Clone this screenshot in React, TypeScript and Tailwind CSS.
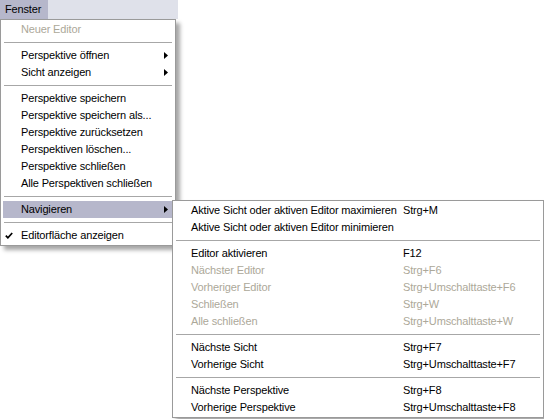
import React from "react";

type Item =
  | { sep: true }
  | { label: string; disabled?: boolean; arrow?: boolean; checked?: boolean; active?: boolean; shortcut?: string };

const mainItems: Item[] = [
  { label: "Neuer Editor", disabled: true },
  { sep: true },
  { label: "Perspektive öffnen", arrow: true },
  { label: "Sicht anzeigen", arrow: true },
  { sep: true },
  { label: "Perspektive speichern" },
  { label: "Perspektive speichern als..." },
  { label: "Perspektive zurücksetzen" },
  { label: "Perspektiven löschen..." },
  { label: "Perspektive schließen" },
  { label: "Alle Perspektiven schließen" },
  { sep: true },
  { label: "Navigieren", arrow: true, active: true },
  { sep: true },
  { label: "Editorfläche anzeigen", checked: true },
];

const subItems: Item[] = [
  { label: "Aktive Sicht oder aktiven Editor maximieren", shortcut: "Strg+M" },
  { label: "Aktive Sicht oder aktiven Editor minimieren" },
  { sep: true },
  { label: "Editor aktivieren", shortcut: "F12" },
  { label: "Nächster Editor", shortcut: "Strg+F6", disabled: true },
  { label: "Vorheriger Editor", shortcut: "Strg+Umschalttaste+F6", disabled: true },
  { label: "Schließen", shortcut: "Strg+W", disabled: true },
  { label: "Alle schließen", shortcut: "Strg+Umschalttaste+W", disabled: true },
  { sep: true },
  { label: "Nächste Sicht", shortcut: "Strg+F7" },
  { label: "Vorherige Sicht", shortcut: "Strg+Umschalttaste+F7" },
  { sep: true },
  { label: "Nächste Perspektive", shortcut: "Strg+F8" },
  { label: "Vorherige Perspektive", shortcut: "Strg+Umschalttaste+F8" },
];

function Sep() {
  return (
    <div className="h-[9px] flex items-center px-[1px]">
      <div className="h-px w-full bg-[#a7a7a7]" />
    </div>
  );
}

function Arrow() {
  return (
    <svg width="4" height="7" viewBox="0 0 4 7" className="block">
      <polygon points="0,0 4,3.5 0,7" fill="#000" />
    </svg>
  );
}

function Check() {
  return (
    <svg width="8" height="7" viewBox="0 0 8 7" className="block">
      <path d="M0.8 3.6 L2.9 5.8 L7.2 1" stroke="#000" strokeWidth="1.7" fill="none" />
    </svg>
  );
}

export default function App() {
  return (
    <div className="relative w-[544px] h-[419px] bg-white overflow-hidden font-['Liberation_Sans',Arial,sans-serif] text-[11px] text-black leading-none tracking-[-0.15px]">
      {/* menubar */}
      <div className="flex h-[19px] w-[178px] bg-[#dfe1ea]">
        <div className="flex items-center w-[48px] pl-[5px] bg-[#b6b7cb]">Fenster</div>
      </div>

      {/* main dropdown */}
      <div className="absolute left-0 top-[19px] w-[176px] border border-[#9a9a9a] bg-white px-[2px] py-[1px] shadow-[4px_4px_4px_rgba(0,0,0,0.35)]">
        {mainItems.map((it, i) =>
          "sep" in it ? (
            <Sep key={i} />
          ) : (
            <div
              key={i}
              className={
                "relative flex items-center h-[17px] pl-[18px] pr-[5px] " +
                (it.active ? "bg-[#b6b7cb] " : "") +
                (it.disabled ? "text-[#aca899]" : "text-black")
              }
            >
              {it.checked && (
                <div className="absolute left-[2px] top-[5px]">
                  <Check />
                </div>
              )}
              <span className="flex-1">{it.label}</span>
              {it.arrow && <Arrow />}
            </div>
          )
        )}
      </div>

      {/* submenu */}
      <div className="absolute left-[172px] top-[200px] w-[372px] border border-[#9a9a9a] bg-white px-[2px] py-[1px] shadow-[4px_4px_4px_rgba(0,0,0,0.35)]">
        {subItems.map((it, i) =>
          "sep" in it ? (
            <Sep key={i} />
          ) : (
            <div
              key={i}
              className={
                "grid grid-cols-[212px_1fr] items-center h-[17px] pl-[16px] " +
                (it.disabled ? "text-[#aca899]" : "text-black")
              }
            >
              <span className="whitespace-nowrap">{it.label}</span>
              <span className="whitespace-nowrap">{it.shortcut ?? ""}</span>
            </div>
          )
        )}
      </div>
    </div>
  );
}
